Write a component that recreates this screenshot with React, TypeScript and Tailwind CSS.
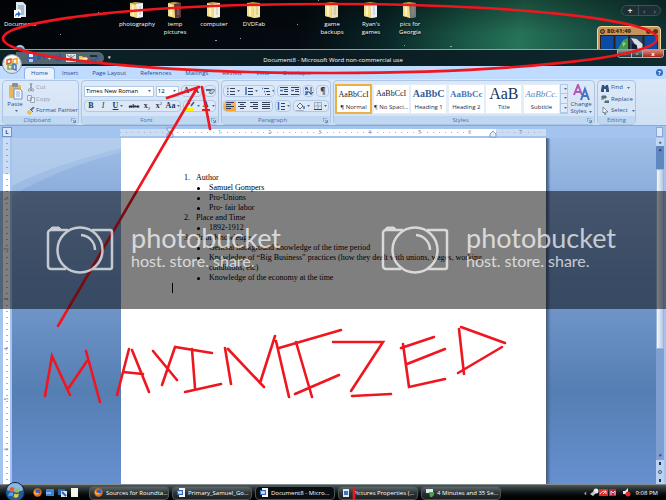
import React from "react";

type Kids = { children?: React.ReactNode };

const ui = "font-['Open_Sans','Noto_Sans',sans-serif]";

function Folder({ tint = "#f7e7a0" }: { tint?: string }) {
  return (
    <svg width="16" height="18" viewBox="0 0 16 18" aria-hidden="true">
      <path d="M1 2l6-1 7 1v14l-5 1-8-2z" fill="#c9a648" />
      <path d="M7 3l7-1v14l-6 1z" fill={tint} />
      <path d="M11 5v9" stroke="#9aa4a8" strokeWidth="1" opacity=".6" />
      <path d="M1 2l6 2 1 13-7-2z" fill="#f4dc86" />
      <path d="M3 4l2 1v10l-2-1z" fill="#fdf3bd" />
    </svg>
  );
}

function DocIcon() {
  return (
    <svg width="16" height="18" viewBox="0 0 16 18" aria-hidden="true">
      <path d="M4 1h7l3 3v12H4z" fill="#dfe8ee" />
      <path d="M6 5h6M6 7h6M8 9h4M9 11h3M9 13h3" stroke="#6f93b4" strokeWidth="1" />
      <rect x="2" y="9" width="7" height="8" fill="#fff" />
      <path d="M3 16c0-3 1-4 3-4V10l3 3-3 3v-2c-1 0-2 0-3 2z" fill="#2c68c4" />
    </svg>
  );
}

function DesktopItem({ left, label, children }: Kids & { left: string; label: string }) {
  return (
    <button className={`absolute top-px flex w-10 flex-col items-center ${left}`}>
      {children}
      <span className="mt-px w-10 whitespace-pre-line text-center text-[6px] leading-[8px] text-white [text-shadow:0_1px_1px_#000]">{label}</span>
    </button>
  );
}

function Gadget() {
  return (
    <div className="absolute right-[5px] top-[26px] h-6 w-16 rounded-t-sm border border-[#f6d79b] bg-[#c6935a] px-[2px]">
      <div className="flex h-[8px] items-center gap-[2px] text-[#2a1608]">
        <span className="h-[5px] w-[5px] rounded-full border border-[#3a210d] bg-[#8c7355]" />
        <span className="flex-1 text-[6px] font-bold leading-[8px]">80:41:49</span>
        <span className="h-[5px] w-[5px] rounded-full bg-[#5b3517]" />
        <span className="h-[5px] w-[5px] rounded-full bg-[#5b3517]" />
      </div>
      <svg className="block w-full" height="15" viewBox="0 0 60 15" preserveAspectRatio="none" aria-hidden="true">
        <rect width="60" height="15" fill="#2e2112" />
        <rect x="1" y="1" width="13" height="14" fill="#0b4ba4" />
        <rect x="16" y="1" width="13" height="14" fill="#0c55a8" />
        <rect x="31" y="1" width="13" height="14" fill="#2b4664" />
        <rect x="46" y="1" width="13" height="14" fill="#0b4ba4" />
        <path d="M18 15l3-5 3-5 5-2v12z" fill="#3f9a4f" />
        <path d="M23 7l4 1-3 4z" fill="#8fd07d" />
        <path d="M32 3l6 1 6 5v6h-5l-3-6z" fill="#d6dee0" />
        <path d="M33 8l5 2 1 5h-6z" fill="#111d2b" />
      </svg>
    </div>
  );
}

function Desktop() {
  return (
    <header className="relative h-[49px] shrink-0 overflow-hidden bg-[linear-gradient(180deg,rgba(0,0,0,.35),transparent_70%),linear-gradient(97deg,#020509_0%,#040a10_45%,#0a2627_58%,#1a5847_70%,#267358_78%,#1c5a4a_86%,#0e3234_100%)]">
      <svg className="absolute inset-0 h-full w-full" aria-hidden="true">
        <g fill="#8fa3b5">
          <rect x="60" y="34" width="1" height="1" />
          <rect x="98" y="12" width="1" height="1" />
          <rect x="215" y="40" width="2" height="1" />
          <rect x="240" y="38" width="1" height="1" />
          <rect x="297" y="24" width="1" height="1" />
          <rect x="318" y="0" width="1" height="1" />
          <rect x="404" y="45" width="1" height="1" />
          <rect x="450" y="46" width="2" height="1" />
        </g>
        <circle cx="20" cy="50" r="5" fill="#a9cbe6" />
        <circle cx="20" cy="51" r="4" fill="#3a6da5" />
      </svg>
      <DesktopItem left="left-0" label="Documents"><DocIcon /></DesktopItem>
      <DesktopItem left="left-[117px]" label="photography"><Folder tint="#eef2f5" /></DesktopItem>
      <DesktopItem left="left-[155px]" label={"temp\npictures"}><Folder tint="#5a3a33" /></DesktopItem>
      <DesktopItem left="left-[194px]" label="computer"><Folder tint="#f3efe0" /></DesktopItem>
      <DesktopItem left="left-[234px]" label="DVDFab"><Folder /></DesktopItem>
      <DesktopItem left="left-[312px]" label={"game\nbackups"}><Folder tint="#ece0b0" /></DesktopItem>
      <DesktopItem left="left-[351px]" label={"Ryan's\ngames"}><Folder tint="#e9eff6" /></DesktopItem>
      <DesktopItem left="left-[390px]" label={"pics for\nGeorgia"}><Folder tint="#767a74" /></DesktopItem>
      <div className="absolute right-[5px] top-[5px] flex h-[11px] w-10 items-center rounded-full border border-[#3f5058] bg-[#1e2e35] text-[8px] leading-none text-[#8c9aa0]">
        <button className="w-4 font-bold text-[#dfe7ea]" aria-label="Add gadget">+</button>
        <span className="h-full w-px bg-[#3f5058]" />
        <button className="flex-1" aria-label="Previous">‹</button>
        <button className="flex-1" aria-label="Next">›</button>
      </div>
      <Gadget />
    </header>
  );
}

function OfficeButton() {
  return (
    <button className="absolute left-[2px] top-[4px] z-10 h-5 w-5" aria-label="Office menu">
      <svg width="20" height="20" viewBox="0 0 20 20" aria-hidden="true">
        <circle cx="10" cy="10" r="9.5" fill="#dfe4ea" stroke="#8593a3" />
        <ellipse cx="10" cy="6" rx="7" ry="4.5" fill="#f9fbfd" />
        <g fill="none" strokeWidth="1.500">
          <path d="M5 6l4-1v4l-4 1z" stroke="#e2571c" />
          <path d="M11 5.500l4-1v5h-4z" stroke="#f0a51c" />
          <path d="M6 11h4v4H6z" stroke="#7fae2c" />
          <path d="M11 10l3 1v5l-3-1z" stroke="#3f76c8" />
        </g>
      </svg>
    </button>
  );
}

function TitleBar() {
  return (
    <div className="relative flex h-[17px] shrink-0 items-center border-t border-[#8fa4a6] bg-gradient-to-r from-[#0c2326] via-[#0a1b22] to-[#0e2b2e] text-white">
      <OfficeButton />
      <div className="ml-4 flex h-[12px] w-[88px] items-center gap-[5px] rounded-r-full bg-[#56666e] pl-[10px]">
        <svg width="74" height="10" viewBox="0 0 74 10" aria-hidden="true">
          <rect x="1" y="1" width="8" height="8" fill="#3b61b5" />
          <rect x="3" y="1" width="4" height="3" fill="#e8eefc" />
          <rect x="3" y="6" width="4" height="3" fill="#b9c9ee" />
          <path d="M13 5c1-3 5-3 6 1M12 2v4h3" stroke="#31589e" strokeWidth="1.500" fill="none" />
          <path d="M22 5h3l-1.500 2z" fill="#c7d2da" />
          <path d="M35 3a3 3 0 1 1-4-1M33 0l2 3-3 1" stroke="#31589e" strokeWidth="1.500" fill="none" />
          <rect x="40" y="1" width="10" height="8" fill="#e1e4e6" />
          <path d="M41 2l8 6M49 2l-8 6M45 2v6" stroke="#75818a" />
          <path d="M53 3h3l1 1h4v5h-8z" fill="#f0c24a" />
          <path d="M54 5h8l-2 4h-7z" fill="#fbe08a" />
          <path d="M64 3h7" stroke="#1d2c3c" strokeWidth="2" />
          <path d="M65 6l3 3 5-7" stroke="#31589e" strokeWidth="1.500" fill="none" />
        </svg>
      </div>
      <span className="ml-1 text-[5px]">▾</span>
      <h1 className="absolute inset-x-0 top-[6px] text-center text-[6px] leading-[8px]">Document8 - Microsoft Word non-commercial use</h1>
      <div className="absolute right-[2px] top-0 flex h-[8px] overflow-hidden rounded-b-sm border border-t-0 border-[#a9b5b8] text-[6px] font-bold leading-[6px]">
        <button className="w-[13px] bg-gradient-to-b from-[#8b999c] to-[#253438]" aria-label="Minimize">–</button>
        <button className="w-[12px] border-x border-[#a9b5b8] bg-gradient-to-b from-[#8b999c] to-[#253438]" aria-label="Maximize">▫</button>
        <button className="w-5 bg-gradient-to-b from-[#d98a80] to-[#a81c14]" aria-label="Close">x</button>
      </div>
    </div>
  );
}

const tabs = ["Insert", "Page Layout", "References", "Mailings", "Review", "View", "Developer"];

function Tabs() {
  return (
    <nav className="flex h-[13px] shrink-0 items-end bg-[#bfdbff] pl-6 pr-[3px] text-[6px] leading-[12px] text-[#1f4c94]">
      <button className="h-3 rounded-t-sm border border-b-0 border-[#8db2e3] bg-[#e9f2fc] px-[6px] leading-[11px]">Home</button>
      {tabs.map((t) => (
        <button key={t} className="h-3 px-[7px]">{t}</button>
      ))}
      <button className="mb-[3px] ml-auto flex h-[7px] w-[7px] items-center justify-center rounded-full bg-[#2f6bc0] text-[6px] font-bold leading-none text-white" aria-label="Help">?</button>
    </nav>
  );
}

function Group({ label, width, launcher = true, children }: Kids & { label: string; width: string; launcher?: boolean }) {
  return (
    <section className={`flex h-[45px] shrink-0 flex-col rounded-sm border border-[#adc5e2] bg-gradient-to-b from-[#dce9f8] to-[#d2e2f5] ${width}`}>
      <div className="min-h-0 flex-1">{children}</div>
      <footer className="flex h-[8px] items-center bg-[#c0d7f1] text-[6px] leading-[8px] text-[#4a73ad]">
        <span className="flex-1 text-center">{label}</span>
        {launcher && (
          <svg className="mr-[2px]" width="5" height="5" viewBox="0 0 5 5" aria-hidden="true">
            <path d="M0 4V0h4M2 2l2 2M4.500 2v2.500H2" stroke="#6a8cbc" fill="none" />
          </svg>
        )}
      </footer>
    </section>
  );
}

function Tool({ label, width = "w-[12px]", on = false, children }: Kids & { label: string; width?: string; on?: boolean }) {
  return (
    <button
      aria-label={label}
      className={`flex h-full shrink-0 items-center justify-center ${width} ${on ? "bg-gradient-to-b from-[#fbc069] to-[#f9a02f]" : ""}`}
    >
      {children}
    </button>
  );
}

function Bar({ children }: Kids) {
  return <div className="flex h-[12px] items-center overflow-hidden rounded-sm border border-[#b2c9e6] bg-[#dde9f7]">{children}</div>;
}

function Caret() {
  return (
    <svg className="ml-[2px] shrink-0" width="3" height="2" viewBox="0 0 3 2" aria-hidden="true">
      <path d="M0 0h3L1.500 2z" fill="#4d6d9c" />
    </svg>
  );
}

function Lines({ d, accent }: { d: string; accent?: string }) {
  return (
    <svg width="8" height="8" viewBox="0 0 8 8" aria-hidden="true">
      <path d={d} stroke="#33425a" fill="none" />
      {accent && <path d={accent} stroke="#3a6fc0" strokeWidth="1.500" fill="none" />}
    </svg>
  );
}

function Clipboard() {
  return (
    <Group label="Clipboard" width="w-[77px]">
      <div className="flex h-full">
        <button className="flex w-6 shrink-0 flex-col items-center pt-[2px] text-[6px] leading-[7px] text-[#2a4f8c]">
          <svg width="15" height="17" viewBox="0 0 15 17" aria-hidden="true">
            <rect x="1" y="2" width="12" height="13" rx="1" fill="#e7b75a" />
            <rect x="4" y="0" width="6" height="4" rx="1" fill="#8c8f96" />
            <path d="M6 6h6l2 2v8H6z" fill="#f4f8ff" stroke="#6f94cc" />
            <path d="M8 9h4M8 11h4M8 13h4" stroke="#8db0e0" />
          </svg>
          <span className="mt-px">Paste</span>
          <span className="mt-[2px] flex"><Caret /></span>
        </button>
        <div className="flex flex-col pt-px text-[6px] leading-[11px] text-[#8f9cae]">
          <button className="flex h-[11px] items-center gap-px">
            <svg width="8" height="9" viewBox="0 0 8 9" aria-hidden="true">
              <path d="M3 0l2 6M5 0L3 6" stroke="#8f9cae" />
              <circle cx="2.500" cy="7" r="1.200" stroke="#8f9cae" fill="none" />
              <circle cx="5.500" cy="7" r="1.200" stroke="#8f9cae" fill="none" />
            </svg>
            Cut
          </button>
          <button className="flex h-3 items-center gap-px">
            <svg width="8" height="8" viewBox="0 0 8 8" aria-hidden="true">
              <path d="M.5.500h4v5h-4zM3.500 2.500h4v5h-4z" stroke="#9aa7b8" fill="#e9eff7" />
            </svg>
            Copy
          </button>
          <button className="flex h-[11px] items-center gap-px whitespace-nowrap text-[#2a4f8c]">
            <svg width="8" height="8" viewBox="0 0 8 8" aria-hidden="true">
              <path d="M7 0L4 3" stroke="#5b78a8" strokeWidth="2" />
              <path d="M1 3l4 2-2 3-3-2z" fill="#f0b938" />
              <path d="M3 2l3 3" stroke="#3a5fa0" />
            </svg>
            Format Painter
          </button>
        </div>
      </div>
    </Group>
  );
}

function FontGroup() {
  return (
    <Group label="Font" width="w-[138px]">
      <div className="flex h-full flex-col gap-[3px] px-[2px] pt-[4px] text-[#26364f]">
        <div className="flex h-[12px] items-center gap-[2px]">
          <label className="relative flex h-[11px] w-[71px] items-center border border-[#b2c9e6] bg-white">
            <select aria-label="Font family" className="h-full w-full appearance-none pl-px text-[6px] leading-[9px] text-black">
              <option>Times New Roman</option>
            </select>
            <span className="pointer-events-none absolute right-[2px] flex"><Caret /></span>
          </label>
          <label className="relative flex h-[11px] w-[23px] items-center border border-[#b2c9e6] bg-white">
            <select aria-label="Font size" className="h-full w-full appearance-none pl-px text-[6px] leading-[9px] text-black">
              <option>12</option>
            </select>
            <span className="pointer-events-none absolute right-[2px] flex"><Caret /></span>
          </label>
          <Bar>
            <Tool label="Grow font" width="w-[10px]"><span className="font-['Liberation_Serif',serif] text-[8px] font-bold">A</span></Tool>
            <Tool label="Shrink font" width="w-[10px]"><span className="font-['Liberation_Serif',serif] text-[7px] font-bold">A</span></Tool>
          </Bar>
          <Bar>
            <Tool label="Clear formatting" width="w-[10px]">
              <svg width="9" height="8" viewBox="0 0 9 8" aria-hidden="true">
                <path d="M0 3h6" stroke="#5b6c88" strokeWidth="2" />
                <path d="M3 6l3-4 3 1-3 4z" fill="#c3cbd8" stroke="#6d7d97" />
              </svg>
            </Tool>
          </Bar>
        </div>
        <div className="flex gap-[2px]">
          <Bar>
            <div className="flex h-full items-center font-['Liberation_Serif',serif] text-[8px] leading-none">
              <Tool label="Bold"><b>B</b></Tool>
              <Tool label="Italic"><i>I</i></Tool>
              <Tool label="Underline" width="w-[18px]"><u className="font-bold">U</u><Caret /></Tool>
              <Tool label="Strikethrough" width="w-[14px]"><s className="text-[7px] font-bold">abc</s></Tool>
              <Tool label="Subscript"><b>x</b><span className="self-end text-[5px]">2</span></Tool>
              <Tool label="Superscript"><b>x</b><span className="self-start text-[5px]">2</span></Tool>
              <Tool label="Change case" width="w-[16px]"><b>Aa</b><Caret /></Tool>
            </div>
          </Bar>
          <Bar>
            <Tool label="Highlight" width="w-[17px]">
              <svg width="9" height="10" viewBox="0 0 9 10" aria-hidden="true">
                <path d="M1 4l3-2M5 5l3-4" stroke="#44597d" strokeWidth="1.500" />
                <rect x="0" y="7" width="8" height="3" fill="#fff100" />
              </svg>
              <Caret />
            </Tool>
            <Tool label="Font color" width="w-[14px]">
              <span className="border-b-2 border-[#e02020] px-px font-['Liberation_Serif',serif] text-[8px] font-bold leading-[8px]">A</span>
              <Caret />
            </Tool>
          </Bar>
        </div>
      </div>
    </Group>
  );
}

function Paragraph() {
  return (
    <Group label="Paragraph" width="w-[110px]">
      <div className="flex h-full flex-col gap-[3px] px-px pt-[4px]">
        <div className="flex gap-[2px]">
          <Bar>
            <Tool label="Bullets" width="w-[18px]"><Lines d="M3 1.500h5M3 4.500h5M3 7.500h5" accent="M0 1.500h1.500M0 4.500h1.500M0 7.500h1.500" /><Caret /></Tool>
            <Tool label="Numbering" width="w-[18px]"><Lines d="M3 1.500h5M3 4.500h5M3 7.500h5" accent="M1 0v8" /><Caret /></Tool>
            <Tool label="Multilevel list" width="w-[16px]"><Lines d="M2 1.500h5M4 4.500h4M5 7.500h3" accent="M0 1.500h1M2 4.500h1M3 7.500h1" /><Caret /></Tool>
          </Bar>
          <Bar>
            <Tool label="Decrease indent" width="w-[11px]"><Lines d="M0 .500h8M4 2.500h4M4 4.500h4M0 7.500h8" accent="M3 3.500H0" /></Tool>
            <Tool label="Increase indent" width="w-[11px]"><Lines d="M0 .500h8M4 2.500h4M4 4.500h4M0 7.500h8" accent="M0 3.500h3" /></Tool>
          </Bar>
          <Bar>
            <Tool label="Sort" width="w-[10px]"><Lines d="M6 0v7M4 5l2 2.500L8 5" accent="M0 3l1.500-3L3 3M0 5h3L0 8h3" /></Tool>
          </Bar>
          <Bar>
            <Tool label="Show marks" width="w-[11px]"><span className="text-[8px] font-bold leading-none text-[#33425a]">¶</span></Tool>
          </Bar>
        </div>
        <div className="flex gap-[2px]">
          <Bar>
            <Tool label="Align left" on><Lines d="M0 .500h8M0 2.500h5M0 4.500h8M0 6.500h5" /></Tool>
            <Tool label="Center"><Lines d="M0 .500h8M2 2.500h4M0 4.500h8M2 6.500h4" /></Tool>
            <Tool label="Align right"><Lines d="M0 .500h8M3 2.500h5M0 4.500h8M3 6.500h5" /></Tool>
            <Tool label="Justify"><Lines d="M0 .500h8M0 2.500h8M0 4.500h8M0 6.500h8" /></Tool>
          </Bar>
          <Bar>
            <Tool label="Line spacing" width="w-[14px]"><Lines d="M4 1.500h4M4 4.500h4M4 7.500h4" accent="M1.500 0v8" /><Caret /></Tool>
          </Bar>
          <Bar>
            <Tool label="Shading" width="w-[18px]">
              <svg width="9" height="9" viewBox="0 0 9 9" aria-hidden="true">
                <path d="M1 4l3-3 3 3-3 3z" fill="#eef3fa" stroke="#5b6c88" />
                <path d="M8 4v3" stroke="#3a6fc0" strokeWidth="1.500" />
                <path d="M0 8.500h8" stroke="#a8b5c6" />
              </svg>
              <Caret />
            </Tool>
            <Tool label="Borders" width="w-[16px]">
              <svg width="8" height="8" viewBox="0 0 8 8" aria-hidden="true">
                <path d="M.5.500h7v7M.5.500v7M4 0v7M0 4h8" stroke="#9aa9bf" fill="none" />
                <path d="M0 7.500h8" stroke="#33425a" />
              </svg>
              <Caret />
            </Tool>
          </Bar>
        </div>
      </div>
    </Group>
  );
}

const styles = [
  { sample: "AaBbCcI", name: "¶ Normal", look: "text-[8px] text-[#1b1b1b]" },
  { sample: "AaBbCcI", name: "¶ No Spaci...", look: "text-[8px] text-[#1b1b1b]" },
  { sample: "AaBbC", name: "Heading 1", look: "text-[10px] font-bold text-[#33609b]" },
  { sample: "AaBbCc", name: "Heading 2", look: "text-[9px] font-bold text-[#4679bb]" },
  { sample: "AaB", name: "Title", look: "text-[16px] text-[#17365d]" },
  { sample: "AaBbCc.", name: "Subtitle", look: "text-[9px] italic text-[#5c88c0]" },
];

function Styles() {
  return (
    <Group label="Styles" width="w-[262px]">
      <div className="flex h-full pl-px pt-[3px]">
        <div className="flex h-[30px] w-[225px] justify-between bg-[#e4eefa]">
          {styles.map((s, i) => (
            <button
              key={s.name}
              className={`flex w-[37px] flex-col items-center overflow-hidden bg-white pb-px ${i === 0 ? "border-2 border-[#eeb040]" : "border border-[#e4eefa]"}`}
            >
              <span className={`flex h-[18px] items-center whitespace-nowrap font-['Liberation_Serif',serif] leading-none ${s.look}`}>{s.sample}</span>
              <span className="whitespace-nowrap text-[6px] leading-[8px] text-[#1d2b45]">{s.name}</span>
            </button>
          ))}
        </div>
        <div className="flex h-[30px] w-[8px] flex-col border border-[#b2c9e6] bg-[#e1ecfa]">
          {["up", "down", "more"].map((n) => (
            <button key={n} aria-label={`Styles ${n}`} className="flex flex-1 items-center justify-center border-b border-[#b2c9e6]"><Caret /></button>
          ))}
        </div>
        <button className="flex flex-1 flex-col items-center text-[6px] leading-[7px] text-[#2a4f8c]">
          <svg width="17" height="17" viewBox="0 0 17 17" aria-hidden="true">
            <path d="M1 11L5 1l4 10M3 8h5" stroke="#b455b5" strokeWidth="2" fill="none" />
            <path d="M8 16l4-11 4 11M9 12h6" stroke="#3f74c5" strokeWidth="2" fill="none" />
          </svg>
          Change
          <span className="flex items-center">Styles<Caret /></span>
        </button>
      </div>
    </Group>
  );
}

function Editing() {
  return (
    <Group label="Editing" width="w-[39px]" launcher={false}>
      <div className="flex h-full flex-col pl-[3px] pt-px text-[6px] leading-[11px] text-[#2a4f8c]">
        <button className="flex h-[11px] items-center gap-[2px]">
          <svg width="8" height="8" viewBox="0 0 8 8" aria-hidden="true">
            <path d="M1 1h2l1 2 1-2h2l1 5v2H5V5H3v3H0V6z" fill="#344f80" />
          </svg>
          Find<Caret />
        </button>
        <button className="flex h-3 items-center gap-[2px]">
          <svg width="8" height="8" viewBox="0 0 8 8" aria-hidden="true">
            <path d="M1 1h4v2H1zM0 4h3M4 6h4v2H4z" fill="#3f8d46" stroke="#58647a" />
          </svg>
          Replace
        </button>
        <button className="flex h-[11px] items-center gap-[2px]">
          <svg width="8" height="8" viewBox="0 0 8 8" aria-hidden="true">
            <path d="M2 0l5 5H4l1 3-1 0-1-3-1 1z" fill="#fff" stroke="#58647a" strokeWidth=".7" />
          </svg>
          Select<Caret />
        </button>
      </div>
    </Group>
  );
}

function Ribbon() {
  return (
    <div className="flex h-[47px] shrink-0 gap-[2px] overflow-hidden border-b border-[#86a9d8] bg-gradient-to-b from-[#dbe8f7] to-[#cfe0f4] px-[2px] pt-px">
      <Clipboard />
      <FontGroup />
      <Paragraph />
      <Styles />
      <Editing />
    </div>
  );
}

const ticks = "bg-[repeating-linear-gradient(90deg,#a7b4c6_0_1px,transparent_1px_6px)]";

function Ruler() {
  return (
    <div className="relative flex h-3 shrink-0 items-center justify-center bg-[#a3c4ee]">
      <button className="absolute left-[2px] top-px h-[10px] w-[10px] border border-[#6c93cb] bg-[#dce9fa] text-[6px] font-bold leading-[8px] text-[#33517f]" aria-label="Tab stop">L</button>
      <div className="flex h-[7px] w-[426px] bg-[#cbdcf3] text-[5px] leading-[7px] text-[#5f6f86]">
        <div className="flex w-[51px] items-center"><span className={`h-px flex-1 ${ticks}`} /></div>
        <div className="flex w-[325px] bg-white">
          {[1, 2, 3, 4, 5, 6].map((n) => (
            <span key={n} className="flex w-[50px] items-center">
              <span className={`h-px flex-1 ${ticks}`} />
              <span>{n}</span>
            </span>
          ))}
          <span className="flex-1" />
        </div>
        <div className="flex w-[50px] items-center">
          <span className={`h-px w-[23px] ${ticks}`} />7<span className={`h-px flex-1 ${ticks}`} />
        </div>
      </div>
      <svg className="absolute left-1/2 top-0 -translate-x-1/2" width="334" height="12" viewBox="0 0 334 12" aria-hidden="true">
        <path d="M1 2h6v2L4 6 1 4zM4 6l3 2v3H1V8zM324 11V8l3-3 3 3v3z" fill="#e3edfa" stroke="#7c9ccb" />
      </svg>
      <button className="absolute right-[3px] top-px h-[10px] w-[7px] border border-[#8aa8d4] bg-[#dce9fa]" aria-label="View ruler" />
    </div>
  );
}

function Doc() {
  return (
    <main className="w-[426px] border-r border-[#4a5f7d] bg-white pl-[63px] pt-[35px] font-['Liberation_Serif','Times_New_Roman',serif] text-[8px] leading-[10px] text-black shadow-[2px_0_2px_#4a6895]">
      <ol>
        <Item n="1." text="Author"><Bullet>Samuel Gompers</Bullet><Bullet>Pro-Unions</Bullet><Bullet>Pro- fair labor</Bullet></Item>
        <Item n="2." text="Place and Time"><Bullet>1892-1912</Bullet></Item>
        <Item n="3." text="Prior Knowledge">
          <Bullet>General background knowledge of the time period</Bullet>
          <Bullet>Knowledge of “Big Business” practices (how they dealt with unions, wages, working<br />conditions, etc)</Bullet>
          <Bullet>Knowledge of the economy at the time</Bullet>
        </Item>
      </ol>
      <div className="-ml-3 h-[10px] w-px bg-black" />
    </main>
  );
}

function Item({ n, text, children }: Kids & { n: string; text: string }) {
  return (
    <li>
      <div className="flex"><span className="w-3">{n}</span>{text}</div>
      <ul className="pl-3">{children}</ul>
    </li>
  );
}

function Bullet({ children }: Kids) {
  return (
    <li className="flex whitespace-nowrap">
      <span className="flex h-[10px] w-[13px] items-center"><span className="ml-px h-[3px] w-[3px] rounded-full bg-black" /></span>
      <span>{children}</span>
    </li>
  );
}

function Workspace() {
  return (
    <div className="flex min-h-[346px] flex-1 bg-[#a3c4ee]">
      <div className="ml-[3px] mr-[2px] flex w-[7px] flex-col bg-white">
        <div className="h-[36px] bg-[#cbdcf3] bg-[repeating-linear-gradient(180deg,transparent_0_5px,#97a6bc_5px_6px)] bg-[length:2px_100%] bg-[position:center] bg-no-repeat" />
        <div className="relative flex-1 bg-[repeating-linear-gradient(180deg,transparent_0_5px,#a7b4c6_5px_6px)] bg-[length:2px_100%] bg-[position:center] bg-no-repeat text-[5px] leading-[6px] text-[#5f6f86]">
          <div className="flex flex-col items-center">
            {[1, 2, 3, 4, 5, 6].map((n) => (
              <span key={n} className="flex h-[50px] -rotate-90 items-center">{n}</span>
            ))}
          </div>
        </div>
      </div>
      <div className="relative flex flex-1 justify-center overflow-hidden bg-[linear-gradient(180deg,#a0c0e9_0%,#8cacdb_16%,#7b9dce_33%,#6c92c6_52%,#557eb3_73%,#6690d0_100%)]">
        <svg className="absolute left-0 top-0" width="110" height="60" viewBox="0 0 110 60" aria-hidden="true">
          <path d="M0 0h110v14C70 24 30 40 0 58z" fill="#b9d1ef" opacity=".35" />
          <path d="M0 0h110v10C70 20 30 32 0 48z" fill="#c4d9f2" opacity=".4" />
        </svg>
        <div className="relative flex"><Doc /></div>
      </div>
      <div className="mr-[2px] flex w-[8px] flex-col items-center bg-[#7e9fcf]">
        <button className="h-2 w-full bg-[#c2d7f3] text-[5px] leading-none text-[#4a5a70]" aria-label="Split">●</button>
        <button className="h-[23px] w-full bg-[#5f87c0] pb-4 text-[5px] leading-none text-[#1f3456]" aria-label="Scroll up">▴</button>
        <div className="h-[180px] w-full border border-[#9fb5d6] bg-gradient-to-r from-[#f4f8fd] to-[#b4c7e2]" />
        <button className="mt-auto h-[10px] w-full text-[5px] leading-none text-[#1f3456]" aria-label="Scroll down">▾</button>
        <div className="flex h-6 w-full flex-col items-center justify-around bg-[#b9d1f2]">
          <span className="h-[3px] w-[2px] bg-[#24344c]" />
          <span className="h-[4px] w-[4px] rounded-full border border-[#4a5a70]" />
          <span className="h-[3px] w-[2px] bg-[#24344c]" />
        </div>
      </div>
    </div>
  );
}

function Firefox() {
  return (
    <svg className="shrink-0" width="9" height="9" viewBox="0 0 9 9" aria-hidden="true">
      <circle cx="4.500" cy="4.500" r="4.200" fill="#e8701c" />
      <circle cx="5" cy="3.500" r="2.300" fill="#3561b5" />
      <path d="M1 2c1 3 2 3 5 3-1 2-4 2-5 0z" fill="#ffb43c" />
    </svg>
  );
}

function WordIcon() {
  return (
    <svg className="shrink-0" width="8" height="9" viewBox="0 0 8 9" aria-hidden="true">
      <rect x="2" width="6" height="9" fill="#f2f6fc" />
      <path d="M0 2h6v5H0z" fill="#2f62b5" />
      <path d="M1 3l1 3 1-3 1 3 1-3" stroke="#fff" strokeWidth=".8" fill="none" />
    </svg>
  );
}

function Task({ label, active = false, children }: Kids & { label: string; active?: boolean }) {
  return (
    <button
      className={`flex h-[14px] w-20 items-center gap-[3px] overflow-hidden whitespace-nowrap rounded-sm border border-[#4b5456] pl-[4px] ${active ? "bg-[#0a0e0f]" : "bg-gradient-to-b from-[#5c6668] via-[#2c3436] to-[#1b2123]"}`}
    >
      {children}
      {label}
    </button>
  );
}

function Taskbar() {
  return (
    <footer className="relative flex h-4 shrink-0 items-center border-t border-[#808b8c] bg-gradient-to-b from-[#4c5758] via-[#11181a] to-black text-[6px] leading-[8px] text-white">
      <button className="absolute left-[5px] top-[-3px]" aria-label="Start">
        <svg width="20" height="20" viewBox="0 0 20 20" aria-hidden="true">
          <circle cx="10" cy="10" r="9.500" fill="#245a96" stroke="#0d2238" />
          <path d="M2 8a8 7 0 0 1 16 0c-4 2-12 2-16 0z" fill="#8db8dd" />
          <path d="M5 6c1.500-1 3-1 4.500 0L8.500 9.500c-1.500-1-3-1-4.500 0z" fill="#e8562a" />
          <path d="M10.500 6.500c1.500 1 3 1 4.500 0l-1 3.500c-1.500 1-3 1-4.500 0z" fill="#8cc63c" />
          <path d="M4 11c1.500-1 3-1 4.500 0l-1 3.500c-1.500-1-3-1-4.500 0z" fill="#4aa5ea" />
          <path d="M9.500 11.500c1.500 1 3 1 4.500 0l-1 3.500c-1.500 1-3 1-4.500 0z" fill="#fbc52d" />
        </svg>
      </button>
      <div className="ml-[33px] flex w-14 items-center gap-[4px]">
        <Firefox />
        <svg width="8" height="8" viewBox="0 0 8 8" aria-hidden="true"><rect width="8" height="7" fill="#3d82cf" /><path d="M0 4h5" stroke="#d3e6f8" /></svg>
        <svg width="9" height="8" viewBox="0 0 9 8" aria-hidden="true"><rect width="7" height="6" fill="#2d65ad" /><rect x="3" y="2" width="6" height="6" fill="#dce8f5" /><path d="M4 3l4 4" stroke="#2d65ad" strokeWidth="2" /></svg>
        <span className="h-[9px] w-[7px] bg-[#f4f4ee]" />
      </div>
      <div className="flex gap-[3px]">
        <Task label="Sources for Roundta..."><Firefox /></Task>
        <Task label="Primary_Samuel_Go..."><WordIcon /></Task>
        <Task label="Document8 - Micro..." active><WordIcon /></Task>
        <Task label="Pictures Properties (...">
          <svg className="shrink-0" width="7" height="8" viewBox="0 0 7 8" aria-hidden="true"><rect width="6" height="8" fill="#dfe9f2" /><rect x="1" y="2" width="4" height="4" fill="#3c77bd" /></svg>
        </Task>
        <Task label="4 Minutes and 35 Se...">
          <svg className="shrink-0" width="8" height="8" viewBox="0 0 8 8" aria-hidden="true"><rect width="7" height="4" fill="#dfe9f2" /><path d="M3 3h5v3L6 8H4z" fill="#4ba34a" /></svg>
        </Task>
      </div>
      <div className="ml-auto flex items-center gap-[2px] pr-2">
        <span className="font-bold">‹</span>
        <svg width="42" height="9" viewBox="0 0 42 9" aria-hidden="true">
          <circle cx="7" cy="3" r="2.500" fill="#eceff0" />
          <path d="M1 6l4-3 2 2-3 3z" fill="#c3cacc" />
          <rect x="10" y="1" width="9" height="7" fill="#e22a2a" />
          <path d="M11 6c1-2 3-3 6-3M14 6l3-3v3" stroke="#fff" strokeWidth=".8" fill="none" />
          <rect x="20" y="1" width="7" height="7" fill="#c81f3d" />
          <path d="M22 7V3l2 2 2-2v4" stroke="#fff" strokeWidth=".8" fill="none" />
          <path d="M34 3h2l3-3v8l-3-2h-2z" fill="#e3e7e8" />
          <circle cx="39" cy="6" r="2.500" fill="#e22a2a" />
        </svg>
        <time className="ml-[3px]">9:08 PM</time>
      </div>
    </footer>
  );
}

function Annotations() {
  return (
    <svg className="pointer-events-none absolute left-0 top-0 z-20" width="666" height="500" viewBox="0 0 666 500" aria-hidden="true">
      <g fill="none" stroke="#ee161f" strokeWidth="2.600" strokeLinecap="round">
        <ellipse cx="330" cy="38.500" rx="327" ry="34.500" />
        <path d="M58 326L197 88M167 98L199 87M202 87L210 129" />
        <path d="M45 396L52 356L70 395M68 389L87 361M86 351L100 402" />
        <path d="M117 395L129 349M132 350L149 392M123 372L143 374" />
        <path d="M153 351L177 380M162 385L175 347L212 353M192 349L195 388M185 392L221 384" />
        <path d="M225 348L231 384M228 349L264 387M260 383L275 336M276 341L289 397" />
        <path d="M279 348L341 330M296 342L312 397M295 394L339 375" />
        <path d="M333 342H383L351 391M352 396L391 394" />
        <path d="M403 344L409 387L445 379M401 348L434 337M407 364L445 349" />
        <path d="M459 329L464 374M461 327L505 343M502 347L458 373" />
        <path d="M354 489V500" />
      </g>
    </svg>
  );
}

function Mark() {
  return (
    <div className="flex w-[335px] shrink-0 items-center pl-[46px] text-white">
      <svg className="shrink-0" width="68" height="48" viewBox="0 0 68 48" fill="none" stroke="currentColor" strokeWidth="2.500" aria-hidden="true">
        <path d="M13 4H5a3 3 0 0 0-3 3v33a3 3 0 0 0 3 3h15M46 43h18a2 2 0 0 0 2-2V6a2 2 0 0 0-2-2H46M13 4h9" />
        <path d="M3 4l3-3h7l3 3z" fill="currentColor" strokeWidth="1" />
        <circle cx="34" cy="24" r="22.500" />
        <path d="M35 9a15 15 0 0 1 14 15" />
      </svg>
      <div className="pb-1 pl-[17px] font-['Lato',sans-serif]">
        <div className="text-[27px] leading-[26px]">photobucket</div>
        <div className="text-[16px] leading-[20px]">host. store. share.</div>
      </div>
    </div>
  );
}

function Watermark() {
  return (
    <div className="pointer-events-none absolute inset-x-0 top-[191px] z-30 flex h-[118px] items-center overflow-hidden bg-black/50">
      <div className="flex opacity-70"><Mark /><Mark /></div>
    </div>
  );
}

export default function App() {
  return (
    <div className={`relative flex min-h-screen flex-col overflow-hidden bg-[#0a1b22] ${ui}`}>
      <Desktop />
      <TitleBar />
      <Tabs />
      <Ribbon />
      <Ruler />
      <Workspace />
      <Taskbar />
      <Annotations />
      <Watermark />
    </div>
  );
}
